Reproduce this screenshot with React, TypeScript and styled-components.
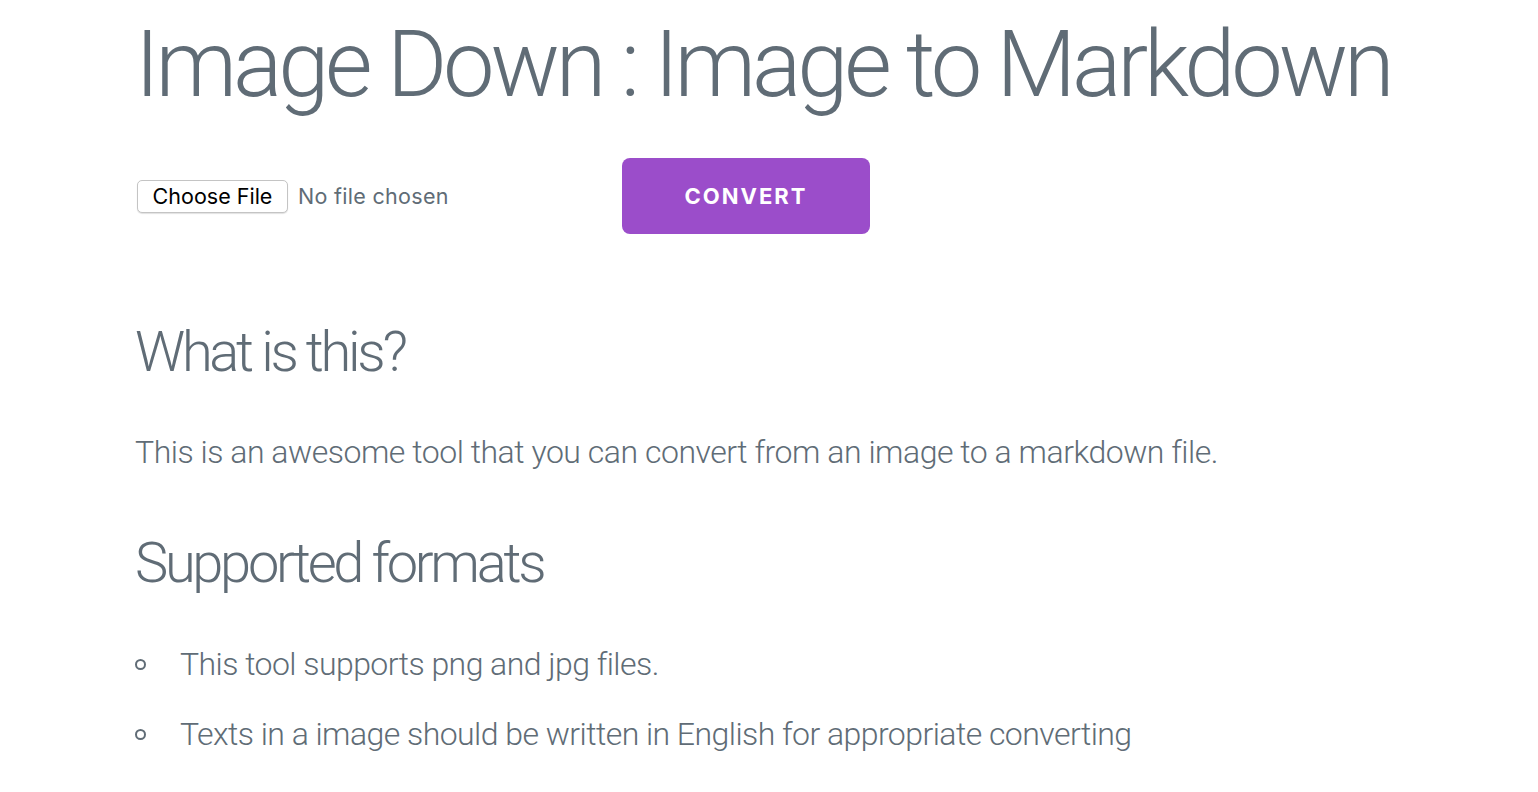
import React from "react";
import styled, { createGlobalStyle } from "styled-components";

const Global = createGlobalStyle`
  html, body { margin: 0; padding: 0; background: #ffffff; }
  body {
    font-family: Roboto, "Helvetica Neue", Helvetica, Arial, sans-serif;
    font-weight: 300;
    color: #606c76;
  }
  * { box-sizing: border-box; }
`;

const Page = styled.main`
  padding: 10px 0 0 135px;
`;

const Title = styled.h1`
  margin: 0;
  font-size: 92px;
  font-weight: 300;
  letter-spacing: -4.1px;
  line-height: 1.2;
  color: #606c76;
  white-space: nowrap;
`;

const FormRow = styled.div`
  display: flex;
  align-items: center;
  margin-top: 38px;
  height: 76px;
`;

const FilePicker = styled.div`
  display: flex;
  align-items: center;
  width: 487px;
  padding-left: 2px;
  gap: 10px;
`;

const ChooseButton = styled.button`
  height: 33px;
  width: 151px;
  padding: 0;
  border: 1px solid #c4c4c4;
  border-radius: 5px;
  background: #ffffff;
  box-shadow: 0 1px 1px rgba(0, 0, 0, 0.12);
  font-family: Inter, Arial, sans-serif;
  font-size: 21.5px;
  font-weight: 400;
  color: #000000;
`;

const NoFile = styled.span`
  font-family: Inter, Arial, sans-serif;
  font-size: 21.5px;
  font-weight: 400;
  letter-spacing: 0.3px;
  color: #606c76;
`;

const ConvertButton = styled.button`
  width: 248px;
  height: 76px;
  border: none;
  border-radius: 8px;
  background: #9b4dca;
  color: #ffffff;
  font-family: Inter, Arial, sans-serif;
  font-size: 22px;
  font-weight: 700;
  letter-spacing: 2px;
  text-transform: uppercase;
`;

const Heading = styled.h3<{ $top: number }>`
  margin: ${(p) => p.$top}px 0 0 0;
  font-size: 56px;
  font-weight: 300;
  letter-spacing: -3.3px;
  line-height: 1.3;
  color: #606c76;
`;

const Paragraph = styled.p`
  margin: 38px 0 0 0;
  font-size: 32px;
  font-weight: 300;
  letter-spacing: -0.48px;
  line-height: 1.6;
`;

const List = styled.ul`
  margin: 39px 0 0 0;
  padding: 0;
  list-style: none;
`;

const Item = styled.li`
  display: flex;
  align-items: center;
  font-size: 32px;
  font-weight: 300;
  letter-spacing: -0.55px;
  line-height: 1.6;
  margin-bottom: 19px;
`;

const Bullet = styled.span`
  width: 11px;
  height: 11px;
  border: 2px solid #606c76;
  border-radius: 50%;
  margin-right: 34px;
  flex: none;
`;

export default function App() {
  return (
    <>
      <Global />
      <Page>
        <Title>Image Down : Image to Markdown</Title>
        <FormRow>
          <FilePicker>
            <ChooseButton type="button">Choose File</ChooseButton>
            <NoFile>No file chosen</NoFile>
          </FilePicker>
          <ConvertButton type="button">Convert</ConvertButton>
        </FormRow>
        <Heading $top={82}>What is this?</Heading>
        <Paragraph>
          This is an awesome tool that you can convert from an image to a markdown file.
        </Paragraph>
        <Heading $top={49}>Supported formats</Heading>
        <List>
          <Item>
            <Bullet />
            This tool supports png and jpg files.
          </Item>
          <Item>
            <Bullet />
            Texts in a image should be written in English for appropriate converting
          </Item>
        </List>
      </Page>
    </>
  );
}
